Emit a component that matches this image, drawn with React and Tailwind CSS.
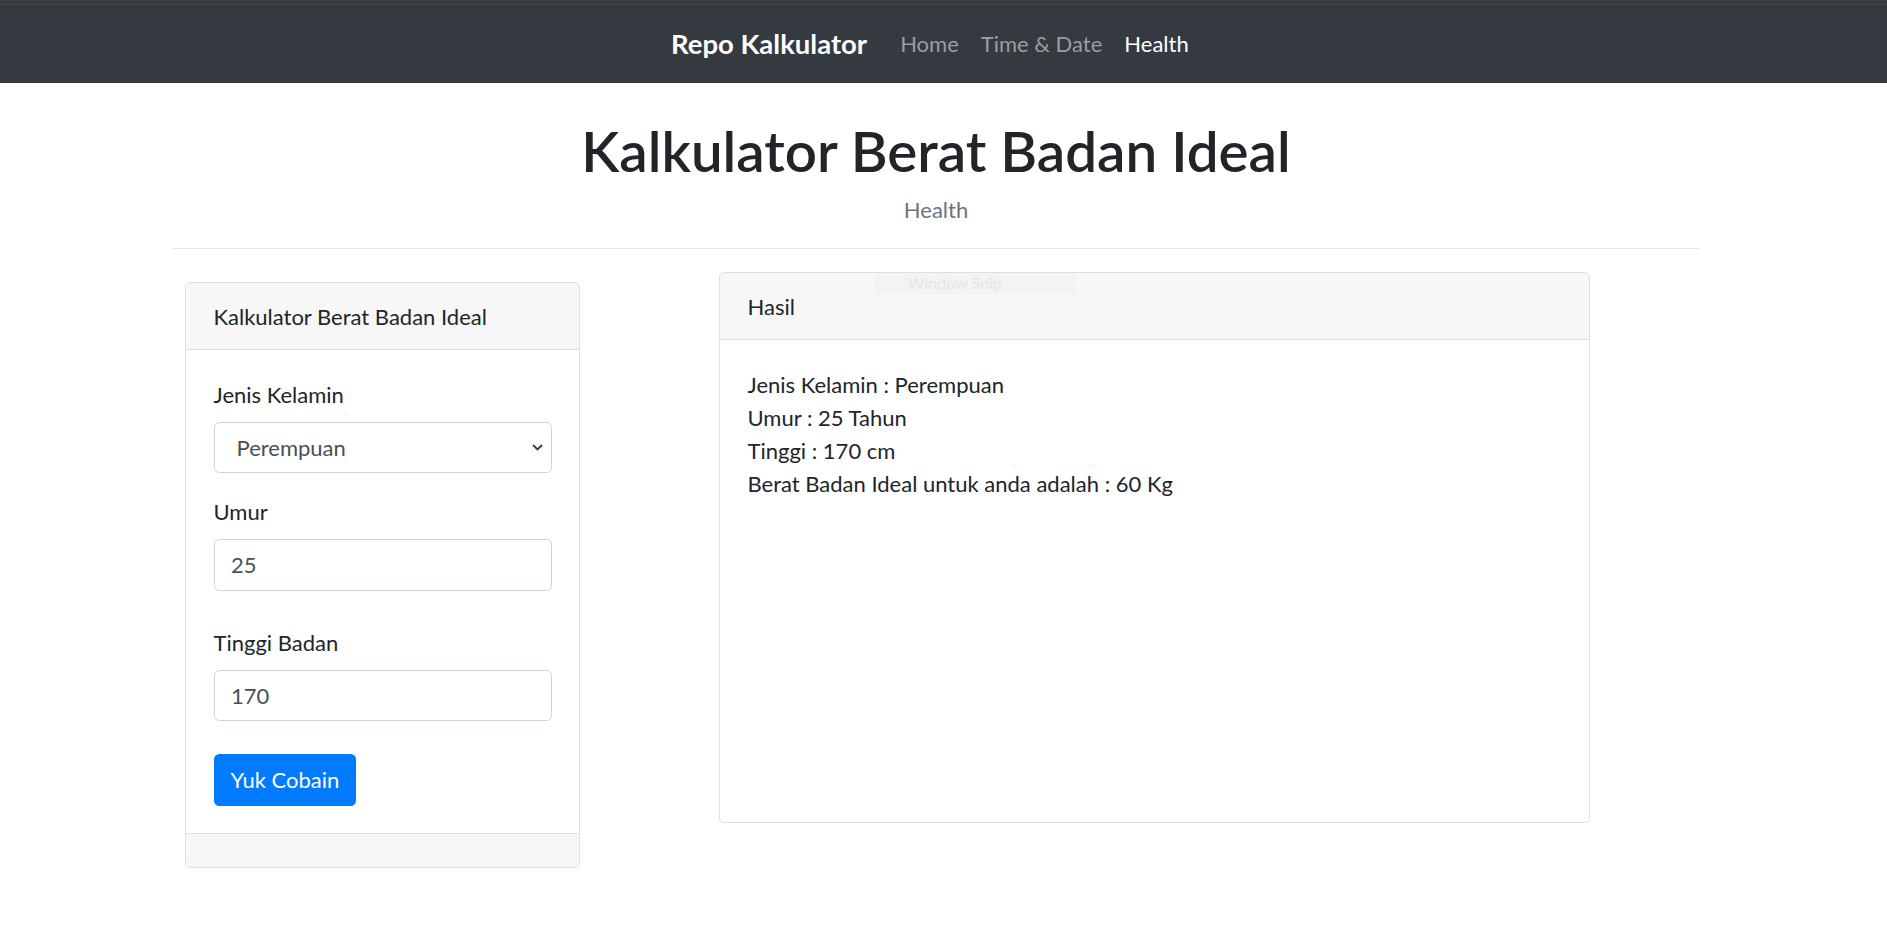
import React from 'react';

const Navbar = () => {
    return (
        <nav className="bg-[#343a40]">
            {/* thin strip above the bar */}
            <div className="h-[5px] bg-[#3a3b3d] border-b border-[#46484b]" />
            <div className="h-[78px] flex items-center pl-[671px]">
                <span className="text-[27.5px] font-bold text-white mr-[22px] leading-none">Repo Kalkulator</span>
                <div className="flex items-center text-[22px] leading-none">
                    <span className="px-[11px] text-[#9a9da0]">Home</span>
                    <span className="px-[11px] text-[#9a9da0]">Time &amp; Date</span>
                    <span className="px-[11px] text-white">Health</span>
                </div>
            </div>
        </nav>
    );
};

const Field = ({ label, children, className = 'mb-[22px]' }) => (
    <div className={className}>
        <label className="block text-[22px] leading-[33px] mb-[11px] text-[#212529]">{label}</label>
        {children}
    </div>
);

const FormCard = () => {
    return (
        <div className="w-[395px] mt-[10px] border border-[#dfdfdf] rounded-[5px] overflow-hidden bg-white">
            <div className="bg-[#f7f7f7] border-b border-[#dfdfdf] px-[27.5px] py-[16.5px] text-[22px] leading-[33px] text-[#212529]">
                Kalkulator Berat Badan Ideal
            </div>
            <div className="p-[27.5px] pb-[27px]">
                <Field label="Jenis Kelamin">
                    <div className="relative">
                        <select
                            defaultValue="Perempuan"
                            className="appearance-none w-full h-[51.5px] border border-[#ced4da] rounded-[5.5px] pl-[22px] pr-[40px] text-[22px] text-[#495057] bg-white"
                        >
                            <option>Laki-laki</option>
                            <option>Perempuan</option>
                        </select>
                        <svg className="absolute right-[9px] top-[22px] pointer-events-none" width="11" height="7" viewBox="0 0 11 7" fill="none">
                            <path d="M1 1l4.5 4.5L10 1" stroke="#343a40" strokeWidth="1.8" />
                        </svg>
                    </div>
                </Field>
                <Field label="Umur" className="mb-[35px]">
                    <input
                        defaultValue="25"
                        className="w-full h-[51.5px] border border-[#ced4da] rounded-[5.5px] px-[16.5px] text-[22px] text-[#495057]"
                    />
                </Field>
                <Field label="Tinggi Badan" className="mb-[33px]">
                    <input
                        defaultValue="170"
                        className="w-full h-[51.5px] border border-[#ced4da] rounded-[5.5px] px-[16.5px] text-[22px] text-[#495057]"
                    />
                </Field>
                <button className="h-[51.5px] px-[17px] rounded-[5.5px] bg-[#007bff] text-white text-[22px] leading-[33px]">
                    Yuk Cobain
                </button>
            </div>
            <div className="bg-[#f7f7f7] border-t border-[#dfdfdf] h-[34px]" />
        </div>
    );
};

const ResultCard = () => {
    return (
        <div className="relative w-[871px] h-[551px] ml-[139px] border border-[#dfdfdf] rounded-[5px] overflow-hidden bg-white">
            <div className="bg-[#f7f7f7] border-b border-[#dfdfdf] px-[27.5px] py-[16.5px] text-[22px] leading-[33px] text-[#212529]">
                Hasil
            </div>
            <div className="p-[27.5px] text-[22px] leading-[33px] text-[#212529]">
                <p>Jenis Kelamin : Perempuan</p>
                <p>Umur : 25 Tahun</p>
                <p>Tinggi : 170 cm</p>
                <p>Berat Badan Ideal untuk anda adalah : 60 Kg</p>
            </div>
            {/* faint snipping tool label */}
            <div className="absolute left-[154px] top-0 w-[202px] h-[21px] bg-[#f2f3f4] text-[#e4e5e7] text-[16px] leading-[20px] pl-[34px]">
                Window Snip
            </div>
        </div>
    );
};

export default function App() {
    return (
        <div className="min-h-screen bg-white font-['Lato',sans-serif]">
            <Navbar />
            <div className="w-[1526px] ml-[173px]">
                <div className="pt-[34px] text-center">
                    <h1 className="text-[56.5px] leading-[66px] font-semibold text-[#212529]">Kalkulator Berat Badan Ideal</h1>
                    <p className="mt-[10px] text-[22px] leading-[33px] text-[#6c757d]">Health</p>
                </div>
                <hr className="mt-[22px] border-t border-[#e6e6e6]" />
                <div className="flex items-start mt-[23px] pl-[12px]">
                    <FormCard />
                    <ResultCard />
                </div>
            </div>
        </div>
    );
}
